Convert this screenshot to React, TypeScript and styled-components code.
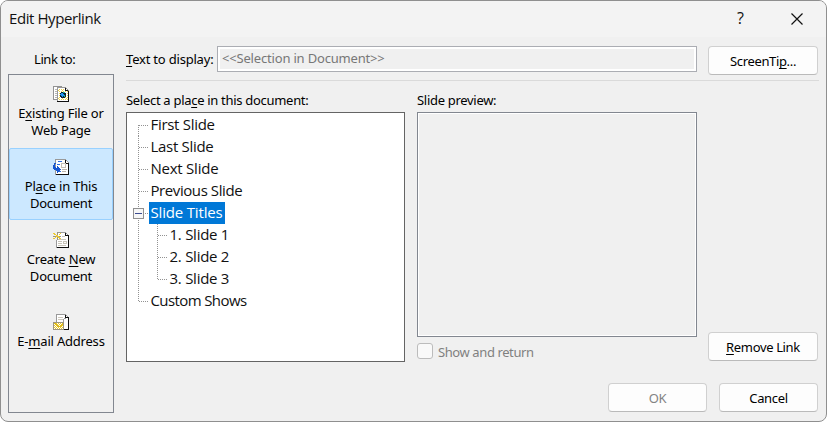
import React from "react";
import styled, { createGlobalStyle, css } from "styled-components";

const Global = createGlobalStyle`
  *, *::before, *::after { box-sizing: border-box; }
  html, body { margin: 0; background: #fff; }
  body { font-family: "Noto Sans", "Open Sans", sans-serif; font-size: 13px; color: #000; }
  u { text-decoration: underline; text-decoration-thickness: 1px; text-underline-offset: 2px; text-decoration-skip-ink: none; }
`;

const Dialog = styled.div`
  width: 827px;
  height: 422px;
  border: 1px solid #8f8f8f;
  border-radius: 8px;
  background: #f0f0f0;
  overflow: hidden;
  display: flex;
  flex-direction: column;
`;

const TitleBar = styled.header`
  height: 36px;
  flex: none;
  display: flex;
  align-items: center;
  background: #f3f3f3;
  padding: 0 23px 0 8px;
`;

const Title = styled.h1`
  flex: 1;
  margin: -2px 0 0;
  font: 400 15px/20px "Open Sans", sans-serif;
  letter-spacing: -0.42px;
  color: #111;
`;

const Help = styled.span`
  font: 400 16px/20px "Open Sans", sans-serif;
  color: #111;
  margin: -2px 47px 0 0;
`;

const Content = styled.div`
  flex: 1;
  display: grid;
  grid-template-columns: 106px 693px;
  column-gap: 12px;
  padding: 0 0 0 7px;
`;

const Sidebar = styled.nav`
  display: flex;
  flex-direction: column;
`;

const SideLabel = styled.div`
  height: 37px;
  padding: 12px 0 0 26px;
  line-height: 20px;
  letter-spacing: -0.4px;
`;

const SideList = styled.div`
  height: 339px;
  border: 1px solid #828790;
`;

const SideItem = styled.div<{ $active?: boolean; $drop?: number }>`
  height: 73px;
  padding-top: ${(p) => 10 + (p.$drop ?? 0)}px;
  display: flex;
  flex-direction: column;
  align-items: center;
  text-align: center;
  line-height: 17px;
  letter-spacing: -0.2px;
  white-space: nowrap;
  border: 1px solid transparent;
  border-radius: 2px;
  ${(p) => p.$active && css`height: 72px; margin-bottom: 1px; background: #cce8ff; border-color: #99d1ff;`}
  svg { flex: none; margin-bottom: 3px; }
`;

const Main = styled.main`
  display: flex;
  flex-direction: column;
`;

const DisplayRow = styled.div`
  height: 44px;
  padding-top: 9px;
  border-bottom: 1px solid #dadada;
  display: flex;
  align-items: flex-start;
`;

const FieldLabel = styled.label`
  width: 91px;
  line-height: 26px;
  letter-spacing: -0.2px;
  white-space: nowrap;
`;

const Field = styled.div`
  width: 480px;
  height: 26px;
  margin-right: 11px;
  border: 1px solid #abadb3;
  box-shadow: inset 0 0 0 2px #fff;
  padding-left: 4px;
  line-height: 23px;
  letter-spacing: -0.18px;
  color: #777;
`;

const Button = styled.button<{ $w: number }>`
  width: ${(p) => p.$w}px;
  height: 29px;
  padding: 0;
  border: 1px solid #d0d0d0;
  border-bottom-color: #bababa;
  border-radius: 4px;
  background: #fdfdfd;
  color: #000;
  font: inherit;
  line-height: 20px;
  letter-spacing: -0.35px;
  &:disabled { color: #838383; }
`;

const Panels = styled.div`
  height: 281px;
  display: grid;
  grid-template-columns: 279px 280px 110px;
  column-gap: 12px;
  & > :last-child { margin-left: -1px; }
`;

const Panel = styled.section`
  display: flex;
  flex-direction: column;
`;

const PanelLabel = styled.div`
  height: 31px;
  padding-top: 9px;
  line-height: 20px;
  letter-spacing: -0.3px;
  white-space: nowrap;
`;

const Tree = styled.div`
  height: 250px;
  border: 1px solid #646464;
  background: #fff;
  padding: 1px 0 0 6px;
  font-family: "Open Sans", sans-serif;
  font-size: 15px;
`;

const TreeRow = styled.div`
  height: 22px;
  display: flex;
  align-items: center;
`;

const Guide = styled.svg`
  flex: none;
  display: block;
`;

const TreeText = styled.span<{ $selected?: boolean; $spacing: number }>`
  height: 22px;
  line-height: 21px;
  padding: 0 2px 0 1.5px;
  white-space: pre;
  letter-spacing: ${(p) => p.$spacing}px;
  color: ${(p) => (p.$selected ? "#fff" : "#111")};
  background: ${(p) => (p.$selected ? "#0078d7" : "transparent")};
`;

const Preview = styled.div`
  height: 225px;
  border: 1px solid #828790;
  box-shadow: inset 0 0 0 1px #fff;
`;

const CheckRow = styled.label`
  display: flex;
  align-items: center;
  gap: 5px;
  margin-top: 6px;
  height: 17px;
  letter-spacing: -0.4px;
  color: #808080;
`;

const CheckBox = styled.span`
  width: 16px;
  height: 16px;
  margin-top: -1px;
  border: 1px solid #bcbcbc;
  border-radius: 3px;
  background: #f9f9f9;
`;

const Side = styled.div`
  display: flex;
  align-items: flex-end;
  padding-bottom: 1px;
`;

const Footer = styled.footer`
  display: flex;
  justify-content: flex-end;
  gap: 12px;
  padding: 21px 1px 0 0;
`;

const Sheet = () => (
  <>
    <path d="M3 .5h9.500l3 3v12H3.500V.5" fill="#fff" stroke="#999" />
    <path d="M12.500.5v3h3M15.500 4v11.500H4" fill="none" stroke="#111" />
  </>
);

const PageIcon = ({ children }: { children: React.ReactNode }) => (
  <svg width="16" height="16" viewBox="0 0 16 16" shapeRendering="crispEdges">{children}</svg>
);

const WebIcon = () => (
  <PageIcon>
    <path d="M.5.5h8v13h-8z" fill="#fff" stroke="#929292" />
    <path d="M2 3.500h2M2 5.500h2M2 7.500h2M2 9.500h2M2 11.500h2" stroke="#b5b5b5" />
    <path d="M4.500 1.500h8l3 3v11h-11z" fill="#fff" stroke="#999" />
    <path d="M6 3.500h6M6 5.500h9M6 7.500h9M6 9.500h9M6 11.500h9M6 13.500h9" stroke="#eed04a" strokeDasharray="1 1" />
    <path d="M5 4.500h7M5 12.500h10" stroke="#eed04a" strokeDasharray="1 3" />
    <path d="M12.500 2v2.500H15M15.500 5v10.500H4" fill="none" stroke="#111" />
    <path d="M8 6h4v1h1v4h-1v1H8v-1H7V7h1z" fill="#0c2030" />
    <path d="M8 7h2v1h1v2h-1v1H9v-1H8V9H7V8h1z" fill="#2196f3" />
    <path d="M10 6h2v1h-2zM11 9h1v2h-1z" fill="#18b89b" />
  </PageIcon>
);

const PlaceIcon = () => (
  <PageIcon>
    <path d="M2.500.5h10l3 3v12h-13z" fill="#fff" stroke="#999" />
    <path d="M12.500 1v3H15M15.500 4v11.500H3" fill="none" stroke="#111" />
    <path d="M5 2.500h4M4 5.500h3M5 12.500h3" stroke="#2d6ee0" />
    <path d="M8.500 4.500h4v4h-4z" fill="none" stroke="#c4beb4" />
    <path d="M9 10.500h5M9 12.500h4" stroke="#b9b3a9" />
    <path d="M1 4h2v1H2v3h1v1h1V7h1v1h1v1h1v1h1v1H7v1H6v1H5v1H4v-2H3v-1H1v-1H0V6h1z" fill="#1757d1" />
  </PageIcon>
);

const NewIcon = () => (
  <PageIcon>
    <Sheet />
    <path d="M9 4.500h3M5 7.500h8M5 9.500h4M5 11.500h4M5 13.500h8" stroke="#c9c5ba" />
    <path d="M10.500 9.500h3v2h-3z" fill="none" stroke="#c9c5ba" />
    <path d="M0 0h4v8H0z" fill="#f0f0f0" />
    <path d="M4 0h1v3H4zM4 5h1v3H4zM0 4h3v1H0zM6 4h2v1H6z" fill="#9a967f" />
    <path d="M0 1h2v1h1v1h2v1h1V2h1V1h1v1H7v1H6v2h1v1h1v1H6V6H5V5H3v1H2v1H0V6h2V5h1V3H1V2H0z" fill="#edc92f" />
  </PageIcon>
);

const MailIcon = () => (
  <PageIcon>
    <Sheet />
    <path d="M5 3.500h5M5 5.500h5" stroke="#cdc8bd" />
    <path d="M10.500 5v10M11 4.500h2" stroke="#999" />
    <path d="M.5 8.500h10v7H.5z" fill="#fff" stroke="#9c9582" />
    <path d="M1 9.500h9M1 11.500h9M1 13.500h9" stroke="#e7c72c" strokeDasharray="1 1" />
    <path d="M2 10.500h8M2 12.500h8M2 14.500h8" stroke="#e7c72c" strokeDasharray="1 1" />
    <path d="M1 9h1v1h1v1h1v1h3v-1h1v-1h1V9h1" fill="none" stroke="#e1bd18" />
  </PageIcon>
);

type Node = { text: string; spacing: number; level?: number; selected?: boolean };
const nodes: Node[] = [
  { text: "First Slide", spacing: -0.3 },
  { text: "Last Slide", spacing: -0.3 },
  { text: "Next Slide", spacing: -0.24 },
  { text: "Previous Slide", spacing: -0.42 },
  { text: "Slide Titles", spacing: -0.17, selected: true },
  { text: "1. Slide 1", spacing: -0.26, level: 1 },
  { text: "2. Slide 2", spacing: -0.26, level: 1 },
  { text: "3. Slide 3", spacing: -0.26, level: 1 },
  { text: "Custom Shows", spacing: -0.6 },
];

const Branch = ({ index, node }: { index: number; node: Node }) => {
  const w = node.level ? 35 : 16;
  const top = index === 0 ? 11 : 0;
  const bottom = index === nodes.length - 1 ? 11 : 22;
  return (
    <Guide width={w} height="22" shapeRendering="crispEdges" fill="none" stroke="#929292" strokeDasharray="1 1">
      <path d={`M5.500 ${top}V${bottom}`} />
      {node.level ? (
        <path d={`M24.500 0V${index === 7 ? 12 : 22}M25 11.500H34`} />
      ) : (
        <path d="M6 11.500h9" />
      )}
      {node.selected && (
        <g strokeDasharray="none">
          <rect x="0.5" y="6.500" width="10" height="10" rx="1" fill="#f6f6f6" stroke="#909090" />
          <path d="M2 11.500h7" stroke="#3b4b91" />
        </g>
      )}
    </Guide>
  );
};

export default function App() {
  return (
    <>
      <Global />
      <Dialog>
        <TitleBar>
          <Title>Edit Hyperlink</Title>
          <Help>?</Help>
          <svg width="12" height="12" viewBox="0 0 12 12"><path d="M.5.5l11 11M11.500.5l-11 11" stroke="#111" strokeWidth="1.2" /></svg>
        </TitleBar>
        <Content>
          <Sidebar>
            <SideLabel>Link to:</SideLabel>
            <SideList>
              <SideItem><WebIcon /><span>E<u>x</u>isting File or<br />Web Page</span></SideItem>
              <SideItem $active><PlaceIcon /><span>Pl<u>a</u>ce in This<br />Document</span></SideItem>
              <SideItem><NewIcon /><span>Create <u>N</u>ew<br />Document</span></SideItem>
              <SideItem $drop={9}><MailIcon /><span>E-<u>m</u>ail Address</span></SideItem>
            </SideList>
          </Sidebar>
          <Main>
            <DisplayRow>
              <FieldLabel><u>T</u>ext to display:</FieldLabel>
              <Field>&lt;&lt;Selection in Document&gt;&gt;</Field>
              <Button $w={110}>ScreenTi<u>p</u>...</Button>
            </DisplayRow>
            <Panels>
              <Panel>
                <PanelLabel>Select a pla<u>c</u>e in this document:</PanelLabel>
                <Tree>
                  {nodes.map((n, i) => (
                    <TreeRow key={n.text}>
                      <Branch index={i} node={n} />
                      <TreeText $selected={n.selected} $spacing={n.spacing}>{n.text}</TreeText>
                    </TreeRow>
                  ))}
                </Tree>
              </Panel>
              <Panel>
                <PanelLabel>Slide preview:</PanelLabel>
                <Preview />
                <CheckRow><CheckBox />Show and return</CheckRow>
              </Panel>
              <Side><Button $w={110}><u>R</u>emove Link</Button></Side>
            </Panels>
            <Footer>
              <Button $w={99} disabled>OK</Button>
              <Button $w={99}>Cancel</Button>
            </Footer>
          </Main>
        </Content>
      </Dialog>
    </>
  );
}
